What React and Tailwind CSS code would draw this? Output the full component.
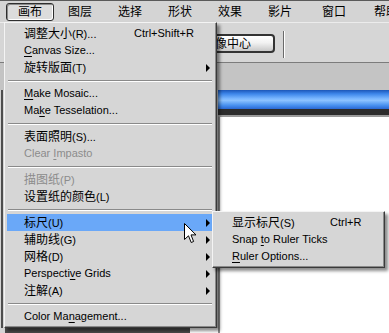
import React from "react";

const Z = ({ children }) => <span className="text-[12px]">{children}</span>;
const U = ({ children }) => <span className="underline underline-offset-[2px] decoration-[1px]">{children}</span>;

function Arrow() {
  return <span className="block w-0 h-0 border-y-[4px] border-y-transparent border-l-[4px] border-l-black" />;
}

function Row({ children, shortcut, arrow, disabled, active, labelW = 110, pl = 17 }) {
  return (
    <div
      className={
        "flex items-center h-[17px] whitespace-nowrap " +
        (active ? "bg-[#6aa8f8] " : "") +
        (disabled ? "text-[#8c8c8c]" : "text-black")
      }
      style={{ paddingLeft: pl }}
    >
      <span className="shrink-0" style={{ width: labelW }}>{children}</span>
      {shortcut && <span>{shortcut}</span>}
      <span className="flex-1" />
      {arrow && (
        <span className="mr-[3px]">
          <Arrow />
        </span>
      )}
    </div>
  );
}

function Sep() {
  return (
    <div className="h-[9px] flex flex-col justify-center mx-[1px]">
      <div className="h-px bg-[#8a8a8a]" />
      <div className="h-px bg-white" />
    </div>
  );
}

function MI({ children, ml }) {
  return (
    <span className="shrink-0 w-[24px] whitespace-nowrap" style={{ marginLeft: ml }}>
      {children}
    </span>
  );
}

export default function App() {
  return (
    <div className="relative w-[389px] h-[333px] overflow-hidden bg-[#d4d4d4] flex flex-col font-['Liberation_Sans','Noto_Sans_CJK_SC',sans-serif] text-[11px] leading-none text-black">
      {/* Menu bar */}
      <div className="h-[22px] shrink-0 flex items-center border-t border-[#5a5a5a] bg-[#d4d4d4] text-[12px] whitespace-nowrap">
        <div className="shrink-0 ml-[6px] w-[48px] h-[18px] flex items-center justify-center rounded-[3px] border border-[#2e2e2e] bg-[#dcdcdc] shadow-[inset_1px_1px_0_#8a8a8a,inset_-1px_-1px_0_#ffffff]">
          画布
        </div>
        <MI ml={14}>图层</MI>
        <MI ml={26}>选择</MI>
        <MI ml={26}>形状</MI>
        <MI ml={26}>效果</MI>
        <MI ml={26}>影片</MI>
        <MI ml={30}>窗口</MI>
        <MI ml={28}>帮助</MI>
      </div>

      {/* Toolbar */}
      <div className="h-[41px] shrink-0 flex items-start bg-[#d6d6d6] border-t border-[#ececec] border-b border-b-[#7c7c7c]">
        <div className="shrink-0 ml-[160px] mt-[11px] w-[115px] h-[19px] rounded-[4px] border-2 border-[#333] bg-[linear-gradient(to_bottom,#ffffff_0%,#f2f2f2_45%,#c8c8c8_100%)] flex items-center justify-end pr-[22px] text-[12px] whitespace-nowrap">
          对齐图像中心
        </div>
        <div className="shrink-0 ml-[8px] mt-[8px] w-[2px] h-[27px] border-l border-[#6a6a6a] bg-white" />
      </div>

      <div className="h-[27px] shrink-0 bg-[#c4c4c4]" />

      <div className="flex-1 flex min-h-0">
        <div className="w-[218px] shrink-0 flex flex-col bg-[#d4d4d4]">
          <div className="flex-1 ml-[1px] border-l-2 border-[#4e4e4e]" />
          <div className="h-[5px] flex">
            <div className="ml-[5px] w-[185px] bg-[#4a4a4a]" />
            <div className="flex-1 bg-white" />
          </div>
        </div>
        <div className="flex-1 flex flex-col">
          <div className="h-[19px] bg-[linear-gradient(to_bottom,#1c56b8_0%,#3d86ea_20%,#79b6ff_45%,#8cc2ff_55%,#4a92f0_80%,#2a68d4_100%)]" />
          <div className="h-[6px] bg-[#2c2c2c]" />
          <div className="h-[2px] bg-[#9a9a9a]" />
          <div className="flex-1 bg-white border-l-2 border-[#8c8c8c]" />
        </div>
      </div>

      {/* Main dropdown menu */}
      <div className="absolute left-[4px] top-[22px] w-[213px] bg-[#d6d6d6] border border-t-[#f4f4f4] border-l-[#f4f4f4] border-r-[#3a3a3a] border-b-[#3a3a3a] pt-[2px] pb-[2px] pl-[2px] pr-[3px] shadow-[inset_-1px_-1px_0_#8a8a8a,3px_3px_3px_rgba(0,0,0,0.45)]">
        <Row shortcut="Ctrl+Shift+R"><Z>调整大小</Z>(R)...</Row>
        <Row><U>C</U>anvas Size...</Row>
        <Row arrow><Z>旋转版面</Z>(T)</Row>
        <Sep />
        <Row><U>M</U>ake Mosaic...</Row>
        <Row>Ma<U>k</U>e Tesselation...</Row>
        <Sep />
        <Row><Z>表面照明</Z>(S)...</Row>
        <Row disabled>Clear <U>I</U>mpasto</Row>
        <Sep />
        <Row disabled><Z>描图纸</Z>(P)</Row>
        <Row><Z>设置纸的颜色</Z>(L)</Row>
        <Sep />
        <Row arrow active><Z>标尺</Z>(U)</Row>
        <Row arrow><Z>辅助线</Z>(G)</Row>
        <Row arrow><Z>网格</Z>(D)</Row>
        <Row arrow>Perspecti<U>v</U>e Grids</Row>
        <Row arrow><Z>注解</Z>(A)</Row>
        <Sep />
        <Row>Color Ma<U>n</U>agement...</Row>
      </div>

      {/* Submenu */}
      <div className="absolute left-[212px] top-[211px] w-[173px] bg-[#d6d6d6] border border-t-[#f4f4f4] border-l-[#f4f4f4] border-r-[#3a3a3a] border-b-[#3a3a3a] pt-[2px] pb-[2px] pl-[1px] shadow-[inset_-1px_-1px_0_#8a8a8a,3px_3px_3px_rgba(0,0,0,0.45)]">
        <Row shortcut="Ctrl+R" labelW={98} pl={18}><Z>显示标尺</Z>(S)</Row>
        <Row labelW={98} pl={18}>Snap <U>t</U>o Ruler Ticks</Row>
        <Row labelW={98} pl={18}><U>R</U>uler Options...</Row>
      </div>

      {/* Mouse cursor */}
      <svg className="absolute left-[184px] top-[223px]" width="13" height="21" viewBox="0 0 13 21">
        <path d="M0.5 0.5 L0.5 16.5 L4.5 12.8 L7.2 19.5 L9.6 18.5 L7 11.9 L12 11.9 Z" fill="#ffffff" stroke="#000000" strokeWidth="1" strokeLinejoin="miter" />
      </svg>
    </div>
  );
}
